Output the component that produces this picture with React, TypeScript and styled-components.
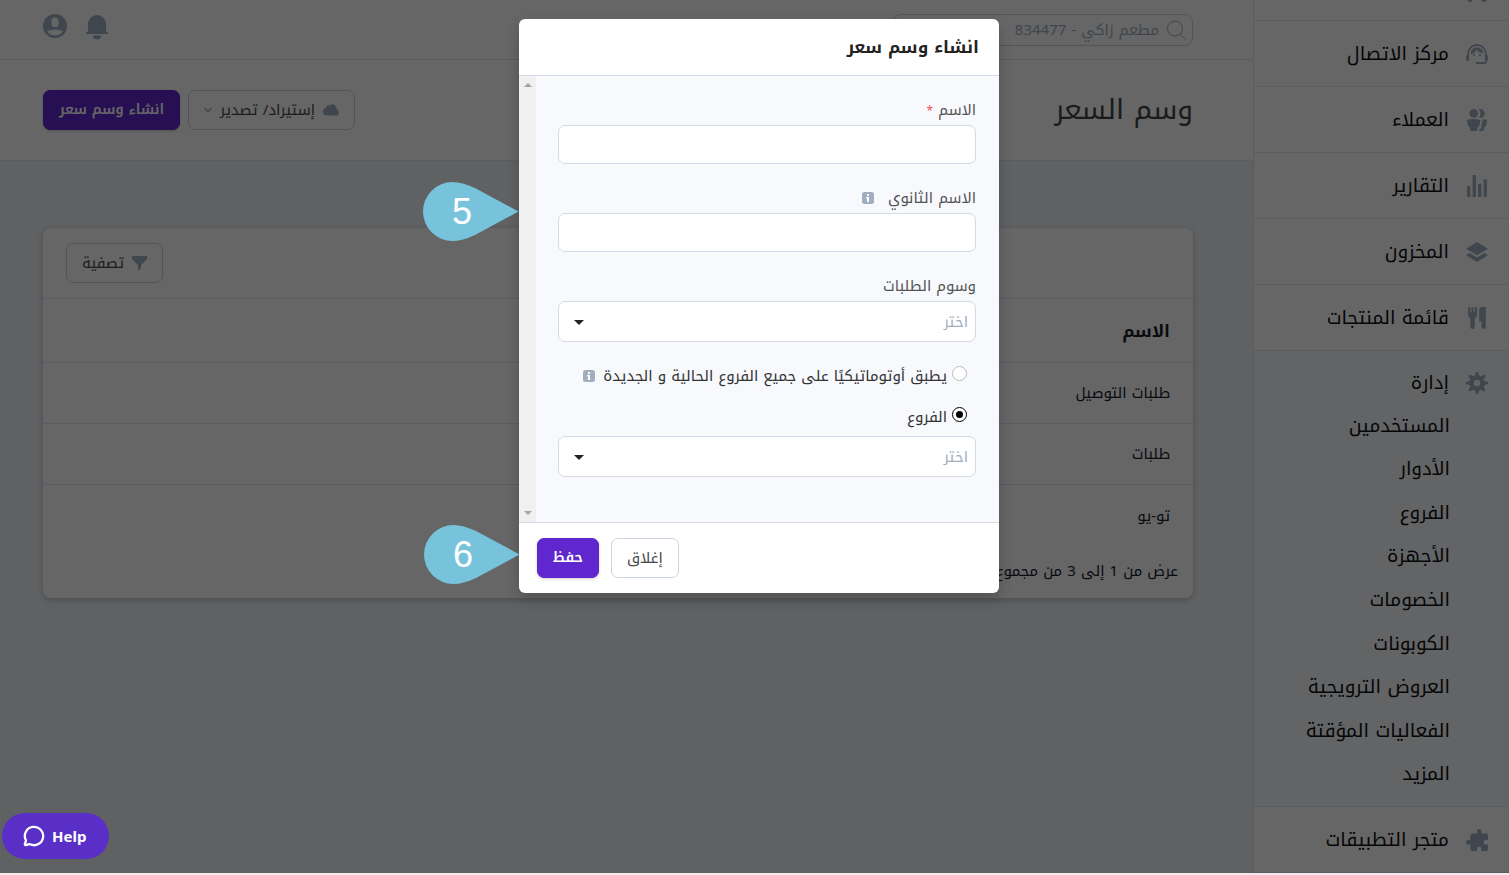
import React from "react";
import styled, { createGlobalStyle, css } from "styled-components";
import { MessageCircle } from "lucide-react";

const GlobalStyle = createGlobalStyle`
  *, *::before, *::after { box-sizing: border-box; }
  body {
    margin: 0;
    background: #fff;
    color: #1a202c;
    font-family: "Noto Kufi Arabic", "Noto Sans Arabic", "Noto Sans", "DejaVu Sans", sans-serif;
    font-size: 15px;
    line-height: 24px;
  }
  button, input, select { font: inherit; color: inherit; }
  h1, h2, ul, p { margin: 0; padding: 0; }
  ul { list-style: none; }
`;

const Shell = styled.div`
  position: relative;
  display: flex;
  height: 100vh;
  overflow: hidden;
  border-bottom: 2px solid #f3e9ee;
`;

const Sidebar = styled.nav`
  display: flex;
  flex-direction: column;
  justify-content: flex-end;
  flex: 0 0 256px;
  overflow: hidden;
  border-left: 1px solid #e2e8f0;
`;

const NavLink = styled.a<{ $plain?: boolean }>`
  display: flex;
  flex: none;
  align-items: center;
  gap: 17px;
  height: ${(p) => (p.$plain ? 53 : 66)}px;
  padding: ${(p) => (p.$plain ? "10px 21px 0" : "0 21px")};
  border-bottom: ${(p) => (p.$plain ? "0" : "1px solid #e2e8f0")};
  color: #111;
  font-size: 19px;
  text-decoration: none;
`;

const NavIcon = styled.span`
  display: flex;
  flex: none;
  justify-content: center;
  width: 22px;
  color: #a0aec0;

  svg { flex: none; }
`;

const NavGroup = styled.section`
  display: flex;
  flex: none;
  flex-direction: column;
  height: 456px;
  padding-bottom: 10px;
  background: #f7fafc;
  border-bottom: 1px solid #e2e8f0;
`;

const SubList = styled.ul`
  display: flex;
  flex: 1;
  flex-direction: column;
`;

const SubItem = styled.li`
  display: flex;
  flex: 1;
  align-items: center;
  padding-right: 59px;

  a { color: #111; font-size: 19px; text-decoration: none; }
`;

const Main = styled.main`
  flex: 1;
  min-width: 0;
  background: #edf2f7;
`;

const TopBar = styled.header`
  display: flex;
  align-items: center;
  justify-content: space-between;
  height: 60px;
  padding: 0 60px 0 43px;
  background: #fff;
  border-bottom: 1px solid #e2e8f0;
`;

const SearchBox = styled.label`
  display: flex;
  align-items: center;
  gap: 7px;
  width: 300px;
  height: 32px;
  padding: 0 6px;
  border: 1px solid #cbd5e0;
  border-radius: 8px;
  color: #a0aec0;

  input {
    flex: 1;
    min-width: 0;
    padding: 0;
    border: 0;
    outline: 0;
    background: none;
  }
  input::placeholder { color: #a0aec0; opacity: 1; }
`;

const TopIcons = styled.div`
  display: flex;
  gap: 18px;
  padding-bottom: 6px;
`;

const IconButton = styled.button`
  display: flex;
  padding: 0;
  border: 0;
  background: none;
  color: #a0aec0;
`;

const TitleBar = styled.div`
  display: flex;
  align-items: center;
  justify-content: space-between;
  height: 101px;
  padding: 0 60px 0 43px;
  background: #fff;
  border-bottom: 1px solid #e2e8f0;

  h1 { font-size: 28px; font-weight: 400; line-height: 40px; color: #444; }
`;

const Actions = styled.div`
  display: flex;
  gap: 8px;
`;

const Button = styled.button<{ $primary?: boolean }>`
  display: inline-flex;
  align-items: center;
  justify-content: center;
  gap: 8px;
  height: 40px;
  padding: 0 15px;
  border: 1px solid #cbd5e0;
  border-radius: 7px;
  background: #fff;
  color: #4a4a4a;
  white-space: nowrap;

  svg { color: #a0aec0; }

  ${(p) =>
    p.$primary &&
    css`
      border-color: #5f27cd;
      background: #5f27cd;
      color: #fff;
      font-size: 14px;
      font-weight: 600;
      box-shadow: 0 1px 3px rgba(0, 0, 0, 0.2);
    `}
`;

const Card = styled.section`
  margin: 67px 60px 0 43px;
  border-radius: 8px;
  background: #fff;
  box-shadow: 0 2px 6px rgba(0, 0, 0, 0.2);
`;

const CardTools = styled.div`
  display: flex;
  justify-content: flex-end;
  padding: 15px 23px;
  border-bottom: 1px solid #e2e8f0;
`;

const Table = styled.table`
  width: 100%;
  border-collapse: separate;
  border-spacing: 0;
  text-align: right;

  th {
    height: 64px;
    padding: 0 23px;
    border-bottom: 1px solid #e2e8f0;
    font-size: 17px;
    font-weight: 700;
  }
  td { height: 61px; padding: 0 23px; border-bottom: 1px solid #e2e8f0; }
  tr:last-child td { border-bottom: 0; }
`;

const Summary = styled.p`
  padding: 13px 15px 15px;
`;

const Overlay = styled.div`
  position: absolute;
  inset: 0;
  display: flex;
  align-items: flex-start;
  justify-content: center;
  padding: 19px 0 0 9px;
  background: rgba(0, 0, 0, 0.6);
`;

const Dialog = styled.section`
  position: relative;
  width: 480px;
  border-radius: 6px;
  background: #fff;
  box-shadow: 0 6px 14px rgba(0, 0, 0, 0.2);
`;

const DialogHead = styled.header`
  padding: 16px 20px;
  border-bottom: 1px solid #d5d9e8;

  h2 { font-size: 17px; line-height: 24px; font-weight: 700; color: #222; }
`;

const DialogBody = styled.div`
  display: flex;
  background: #f7f9fd;
`;

const Form = styled.form`
  display: flex;
  flex: 1;
  flex-direction: column;
  padding: 22px 23px 45px 22px;
`;

const Field = styled.div`
  display: flex;
  flex-direction: column;
  gap: 3px;
  margin-bottom: 22px;
`;

const FieldLabel = styled.div`
  display: flex;
  align-items: center;
  gap: 14px;
  height: 24px;
  color: #555;

  svg { color: #a0aec0; }
  em { color: #f05252; font-size: 12px; font-style: normal; }
`;

const TextInput = styled.input`
  width: 100%;
  height: 39px;
  padding: 0 8px;
  border: 1px solid #d5d9e8;
  border-radius: 7px;
  background: #fff;
`;

const SelectWrap = styled.div`
  position: relative;

  select {
    display: block;
    width: 100%;
    height: 41px;
    padding: 0 7px;
    border: 1px solid #d5d9e8;
    border-radius: 7px;
    background: #fff;
    color: #a0aec0;
    appearance: none;
  }
  svg { position: absolute; top: 19px; left: 16px; color: #222; pointer-events: none; }
`;

const RadioRow = styled.div<{ $tight?: boolean }>`
  display: flex;
  align-items: center;
  gap: 5px;
  height: 24px;
  margin-bottom: ${(p) => (p.$tight ? 7 : 17)}px;
  padding-right: 9px;
  color: #333;

  svg { margin-right: 3px; color: #a0aec0; }
`;

const Radio = styled.input`
  display: grid;
  place-content: center;
  width: 15px;
  height: 15px;
  margin: 0 0 5px;
  border: 1px solid #bbb;
  border-radius: 50%;
  background: #fff;
  appearance: none;

  &:checked { border-color: #000; }
  &:checked::before {
    content: "";
    width: 7px;
    height: 7px;
    border-radius: 50%;
    background: #000;
  }
`;

const ScrollTrack = styled.div`
  display: flex;
  flex-direction: column;
  align-items: center;
  justify-content: space-between;
  width: 17px;
  padding: 7px 0;
  background: #f0f0f0;
  color: #a3a3a3;
`;

const DialogFoot = styled.footer`
  display: flex;
  justify-content: flex-end;
  gap: 12px;
  padding: 15px 18px;
  border-top: 1px solid #d5d9e8;
`;

const Marker = styled.div<{ $top: number; $left: number }>`
  position: absolute;
  top: ${(p) => p.$top}px;
  left: ${(p) => p.$left}px;
  width: 96px;
  height: 60px;
  color: #fff;
  font-family: "Liberation Sans", Arial, sans-serif;
  font-size: 36px;
  line-height: 60px;
  direction: ltr;

  svg { position: absolute; inset: 0; }
  span { position: relative; padding-left: 29px; }
`;

const HelpButton = styled.button`
  position: absolute;
  bottom: 14px;
  left: 2px;
  display: flex;
  align-items: center;
  gap: 7px;
  height: 46px;
  padding: 0 23px 0 21px;
  border: 0;
  border-radius: 23px;
  background: #5a2fc8;
  color: #fff;
  font-family: "Noto Sans", sans-serif;
  font-weight: 700;
  direction: ltr;
`;

const paths = {
  people:
    "M7 8a4 4 0 1 1 0-8 4 4 0 0 1 0 8zm0 1c2.15 0 4.2.4 6.1 1.09L12 16h-1.25L10 20H4l-.75-4H2L.9 10.09A17.93 17.93 0 0 1 7 9zm8.31.17c1.32.18 2.59.48 3.8.92L18 16h-1.25L16 20h-3.96l.37-2h1.25l1.65-8.83zM13 0a4 4 0 1 1-1.33 7.76 5.96 5.96 0 0 0 0-7.52C12.1.1 12.53 0 13 0z",
  bars: "M1 10h3v10H1V10zM6 0h3v20H6V0zm5 8h3v12h-3V8zm5-4h3v16h-3V4z",
  layers: "M10 1l10 6-10 6L0 7l10-6zm6.67 10L20 13l-10 6-10-6 3.33-2L10 15l6.67-4z",
  food: "M18 11v7a2 2 0 0 1-4 0v-5h-2V3a3 3 0 0 1 3-3h3v11zM4 10a2 2 0 0 1-2-2V1a1 1 0 0 1 2 0v4h1V1a1 1 0 0 1 2 0v4h1V1a1 1 0 0 1 2 0v7a2 2 0 0 1-2 2v8a2 2 0 0 1-4 0v-8z",
  cog: "M3.94 6.5L2.22 3.64l1.42-1.42L6.5 3.94c.52-.3 1.1-.54 1.7-.7L9 0h2l.8 3.24c.6.16 1.18.4 1.7.7l2.86-1.72 1.42 1.42-1.72 2.86c.3.52.54 1.1.7 1.7L20 9v2l-3.24.8c-.16.6-.4 1.18-.7 1.7l1.72 2.86-1.42 1.42-2.86-1.72c-.52.3-1.1.54-1.7.7L11 20H9l-.8-3.24c-.6-.16-1.18-.4-1.7-.7l-2.86 1.72-1.42-1.42 1.72-2.86c-.3-.52-.54-1.1-.7-1.7L0 11V9l3.24-.8c.16-.6.4-1.18.7-1.7zM10 13a3 3 0 1 0 0-6 3 3 0 0 0 0 6z",
  plugin:
    "M20 14v4a2 2 0 0 1-2 2h-4v-2a2 2 0 0 0-2-2 2 2 0 0 0-2 2v2H6a2 2 0 0 1-2-2v-4H2a2 2 0 0 1-2-2 2 2 0 0 1 2-2h2V6c0-1.1.9-2 2-2h4V2a2 2 0 0 1 2-2 2 2 0 0 1 2 2v2h4a2 2 0 0 1 2 2v4h-2a2 2 0 0 0-2 2 2 2 0 0 0 2 2h2z",
  user: "M10 20a10 10 0 1 1 0-20 10 10 0 0 1 0 20zM7 6v2a3 3 0 1 0 6 0V6a3 3 0 1 0-6 0zm-3.65 8.44a8 8 0 0 0 13.3 0 15.94 15.94 0 0 0-13.3 0z",
  cloud:
    "M16.88 9.1A4 4 0 0 1 16 17H5a5 5 0 0 1-1-9.9V7a3 3 0 0 1 4.52-2.59A4.98 4.98 0 0 1 17 8c0 .38-.04.74-.12 1.1z",
  filter: "M12 12l8-8V0H0v4l8 8v8l4-4v-4z",
  cart: "M4 2h16l-3 9H4a1 1 0 1 0 0 2h13v2H4a3 3 0 0 1 0-6h.33L3 5 2 2H0V0h3a1 1 0 0 1 1 1v1zm1 18a2 2 0 1 1 0-4 2 2 0 0 1 0 4zm10 0a2 2 0 1 1 0-4 2 2 0 0 1 0 4z",
};

const Glyph = ({ name, size = 22 }: { name: keyof typeof paths; size?: number }) => (
  <svg width={size} height={size} viewBox="0 0 20 20" fill="currentColor" aria-hidden="true">
    <path d={paths[name]} />
  </svg>
);

const AgentIcon = () => (
  <svg width="22" height="20" viewBox="0 0 22 20" fill="currentColor" aria-hidden="true">
    <path
      d="M2 11.500V10a9 9 0 0 1 18 0v7.300a1.700 1.700 0 0 1-1.700 1.700H10"
      fill="none"
      stroke="currentColor"
      strokeWidth="1.800"
    />
    <path d="M3 11v6H1.800A1.800 1.800 0 0 1 0 15.200v-2.400A1.800 1.800 0 0 1 1.800 11zM19 11h1.200a1.800 1.800 0 0 1 1.800 1.800v2.400a1.800 1.800 0 0 1-1.800 1.800H19z" />
    <circle cx="8" cy="11" r="1.100" />
    <circle cx="14" cy="11" r="1.100" />
    <path d="M4.500 10.500C4.500 6 7.500 3.500 11 3.500c3.400 0 6 2.200 6.600 5.600-3 0-5.400-1.300-6.900-3.600-1.100 2.400-3.300 4.300-6.200 5z" />
  </svg>
);

const InfoIcon = () => (
  <svg width="12" height="12" viewBox="0 0 12 12" aria-hidden="true">
    <rect width="12" height="12" rx="2.500" fill="currentColor" />
    <path d="M5 2h2v2H5zM4 5h3v5H5V6.500H4z" fill="#fff" />
  </svg>
);

const Caret = ({ up, width = 10 }: { up?: boolean; width?: number }) => (
  <svg width={width} height={width / 2} viewBox="0 0 10 5" fill="currentColor" aria-hidden="true">
    <path d={up ? "M0 5h10L5 0z" : "M0 0h10L5 5z"} />
  </svg>
);

const Drop = () => (
  <svg width="96" height="60" viewBox="0 0 96 60" aria-hidden="true">
    <path d="M95.500 29.500L52 6Q39 0 29.500 0A29.500 29.500 0 0 0 29.500 59Q39 59 52 53Z" fill="#78c3dc" />
  </svg>
);

const topItems = [
  { href: "#customers", icon: "people", text: "العملاء" },
  { href: "#reports", icon: "bars", text: "التقارير" },
  { href: "#inventory", icon: "layers", text: "المخزون" },
  { href: "#menu", icon: "food", text: "قائمة المنتجات" },
] as const;

const subItems = [
  "المستخدمين",
  "الأدوار",
  "الفروع",
  "الأجهزة",
  "الخصومات",
  "الكوبونات",
  "العروض الترويجية",
  "الفعاليات المؤقتة",
  "المزيد",
];

const rows = ["طلبات التوصيل", "طلبات", "تو-يو"];

export default function App() {
  return (
    <Shell dir="rtl" lang="ar">
      <GlobalStyle />
      <Sidebar>
        <NavLink href="#orders" aria-label="الطلبات">
          <NavIcon>
            <Glyph name="cart" size={28} />
          </NavIcon>
        </NavLink>
        <NavLink href="#calls">
          <NavIcon>
            <AgentIcon />
          </NavIcon>
          مركز الاتصال
        </NavLink>
        {topItems.map((item) => (
          <NavLink key={item.href} href={item.href}>
            <NavIcon>
              <Glyph name={item.icon} />
            </NavIcon>
            {item.text}
          </NavLink>
        ))}
        <NavGroup>
          <NavLink href="#manage" $plain>
            <NavIcon>
              <Glyph name="cog" />
            </NavIcon>
            إدارة
          </NavLink>
          <SubList>
            {subItems.map((item) => (
              <SubItem key={item}>
                <a href="#manage">{item}</a>
              </SubItem>
            ))}
          </SubList>
        </NavGroup>
        <NavLink href="#apps">
          <NavIcon>
            <Glyph name="plugin" />
          </NavIcon>
          متجر التطبيقات
        </NavLink>
      </Sidebar>

      <Main>
        <TopBar>
          <SearchBox>
            <svg width="20" height="20" viewBox="0 0 20 20" fill="none" stroke="currentColor" aria-hidden="true">
              <circle cx="9" cy="8.500" r="7.500" />
              <path d="M14 14l5.500 5.500" />
            </svg>
            <input type="text" aria-label="بحث" placeholder="مطعم زاكي - 834477" />
          </SearchBox>
          <TopIcons>
            <IconButton aria-label="الإشعارات">
              <svg width="24" height="26" viewBox="0 0 24 26" fill="currentColor" aria-hidden="true">
                <path d="M3 17V10a9 9 0 0 1 18 0v7l2 2v1H1v-1zM8 21.500h8a4 4 0 0 1-8 0z" />
              </svg>
            </IconButton>
            <IconButton aria-label="الحساب">
              <Glyph name="user" size={24} />
            </IconButton>
          </TopIcons>
        </TopBar>

        <TitleBar>
          <h1>وسم السعر</h1>
          <Actions>
            <Button>
              <Glyph name="cloud" size={16} />
              إستيراد/ تصدير
              <svg
                width="8"
                height="6"
                viewBox="0 0 8 6"
                fill="none"
                stroke="currentColor"
                strokeWidth="1.500"
                aria-hidden="true"
              >
                <path d="M.5 1L4 4.500 7.500 1" />
              </svg>
            </Button>
            <Button $primary>انشاء وسم سعر</Button>
          </Actions>
        </TitleBar>

        <Card>
          <CardTools>
            <Button>
              <Glyph name="filter" size={15} />
              تصفية
            </Button>
          </CardTools>
          <Table>
            <thead>
              <tr>
                <th scope="col">الاسم</th>
              </tr>
            </thead>
            <tbody>
              {rows.map((row) => (
                <tr key={row}>
                  <td>{row}</td>
                </tr>
              ))}
            </tbody>
          </Table>
          <Summary>عرض من 1 إلى 3 من مجموع 3</Summary>
        </Card>
      </Main>

      <Overlay>
        <Dialog role="dialog" aria-labelledby="dialog-title">
          <DialogHead>
            <h2 id="dialog-title">انشاء وسم سعر</h2>
          </DialogHead>
          <DialogBody>
            <Form>
              <Field>
                <FieldLabel>
                  <label htmlFor="name">
                    الاسم <em>*</em>
                  </label>
                </FieldLabel>
                <TextInput id="name" type="text" />
              </Field>
              <Field>
                <FieldLabel>
                  <label htmlFor="name-alt">الاسم الثانوي</label>
                  <InfoIcon />
                </FieldLabel>
                <TextInput id="name-alt" type="text" />
              </Field>
              <Field>
                <FieldLabel>
                  <label htmlFor="tags">وسوم الطلبات</label>
                </FieldLabel>
                <SelectWrap>
                  <select id="tags">
                    <option>اختر</option>
                  </select>
                  <Caret />
                </SelectWrap>
              </Field>
              <RadioRow>
                <Radio type="radio" id="all" name="scope" />
                <label htmlFor="all">يطبق أوتوماتيكيًا على جميع الفروع الحالية و الجديدة</label>
                <InfoIcon />
              </RadioRow>
              <RadioRow $tight>
                <Radio type="radio" id="some" name="scope" defaultChecked />
                <label htmlFor="some">الفروع</label>
              </RadioRow>
              <SelectWrap>
                <select aria-label="الفروع">
                  <option>اختر</option>
                </select>
                <Caret />
              </SelectWrap>
            </Form>
            <ScrollTrack>
              <Caret up width={8} />
              <Caret width={8} />
            </ScrollTrack>
          </DialogBody>
          <DialogFoot>
            <Button>إغلاق</Button>
            <Button $primary>حفظ</Button>
          </DialogFoot>
          <Marker $top={163} $left={-96}>
            <Drop />
            <span>5</span>
          </Marker>
          <Marker $top={506} $left={-95}>
            <Drop />
            <span>6</span>
          </Marker>
        </Dialog>
      </Overlay>

      <HelpButton>
        <MessageCircle size={22} strokeWidth={2.5} />
        Help
      </HelpButton>
    </Shell>
  );
}
